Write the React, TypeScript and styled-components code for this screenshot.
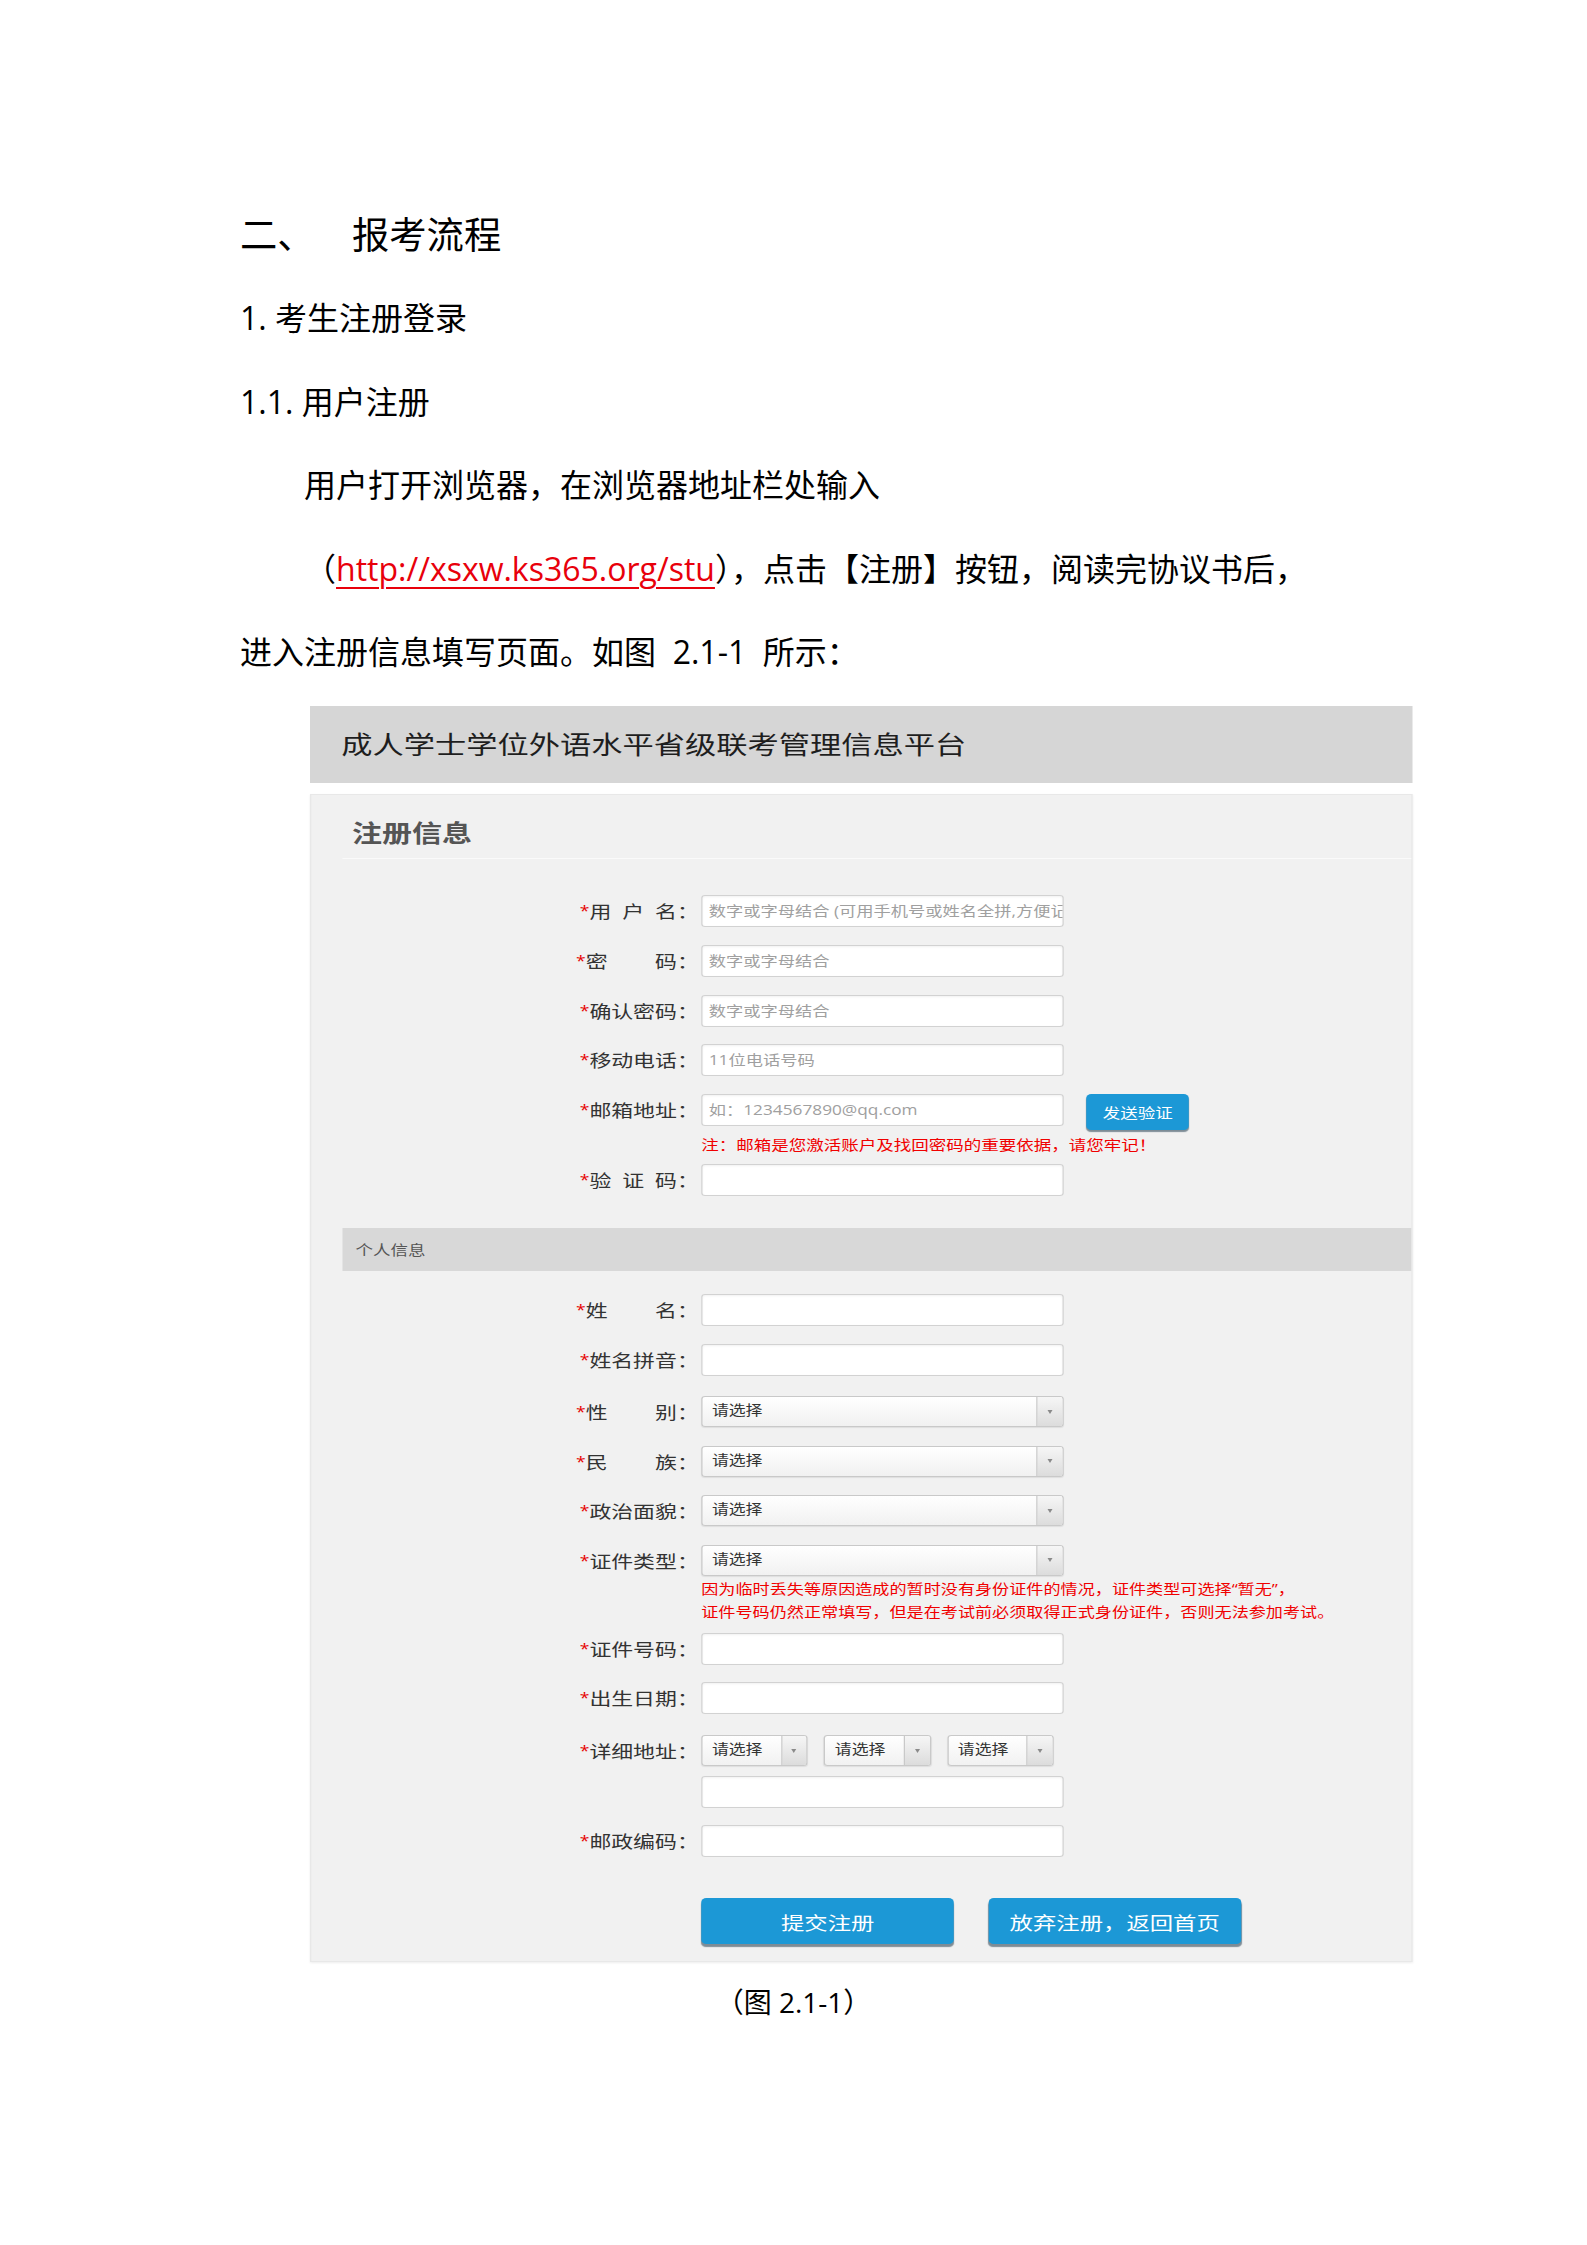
import React from 'react';
import styled, {createGlobalStyle} from 'styled-components';

// the form screenshot sits in the document stretched sideways, so the
// figure is laid out at its natural width and widened as a whole
const STRETCH = 1.25;

const GlobalStyle = createGlobalStyle`
  html, body {
    margin: 0;
    padding: 0;
    background: #fff;
  }
  body {
    font-family: "Open Sans", "Noto Sans CJK SC", sans-serif;
    color: #000;
  }
`

const Page = styled.div`
  width: 1587px;
  min-height: 2245px;
  box-sizing: border-box;
  padding: 193px 240px 0;
`

const Line = styled.p<{$size?: number; $indent?: boolean}>`
  margin: 0;
  font-size: ${p => p.$size || 32}px;
  line-height: 83.4px;
  padding-left: ${p => (p.$indent ? '64px' : '0')};
  white-space: nowrap;
`

const HeadNum = styled.span`
  display: inline-block;
  width: 112px;
`

const Url = styled.a`
  color: #e8000b;
  text-decoration: underline;
  text-decoration-thickness: 2px;
  text-underline-offset: 6px;
`

const Figure = styled.div`
  width: ${1102 / STRETCH}px;
  margin: 13px 0 0 70px;
  transform: scaleX(${STRETCH});
  transform-origin: 0 0;
`

const TitleBar = styled.div`
  height: 77px;
  margin-bottom: 11px;
  padding-left: 25px;
  background: #d6d6d6;
  color: #1e1e1e;
  font-size: 25px;
  line-height: 77px;
  white-space: nowrap;
`

const Panel = styled.div`
  background: #f1f1f1;
  border: 1px solid #e8e8e8;
  box-shadow: 0 1px 2px rgba(0, 0, 0, 0.07);
  padding: 0 0 17px 25px;
`

const PanelHeader = styled.div`
  padding: 13px 0 0 7.6px;
  height: 50px;
  line-height: 50px;
  font-size: 24px;
  font-weight: bold;
  color: #555;
  border-bottom: 1px solid #fafafa;
`

const SubBar = styled.div`
  margin-top: 32px;
  height: 43px;
  line-height: 43px;
  padding-left: 10.4px;
  background: #d8d8d8;
  color: #555;
  font-size: 14px;
`

const Row = styled.div<{$top?: number}>`
  display: grid;
  grid-template-columns: 285px 1fr;
  column-gap: 2px;
  align-items: start;
  margin-top: ${p => (p.$top ?? 17.6)}px;
`

const Label = styled.div`
  height: 32px;
  line-height: 32px;
  text-align: right;
  font-size: 17.5px;
  color: #333;
  white-space: nowrap;
`

const Star = styled.span`
  color: #e60000;
  font-size: 14px;
  vertical-align: 2px;
`

const Controls = styled.div`
  display: flex;
  flex-direction: column;
  align-items: flex-start;
`

const Inline = styled.div<{$gap: number}>`
  display: flex;
  align-items: flex-start;
  gap: ${p => p.$gap}px;
`

const Input = styled.div<{$top?: number}>`
  box-sizing: border-box;
  width: 289.6px;
  height: 32px;
  margin-top: ${p => p.$top || 0}px;
  padding: 0 5px;
  background: #fff;
  border: 1px solid #d2d2d2;
  border-radius: 3px;
  box-shadow: inset 0 1px 2px rgba(0, 0, 0, 0.06);
  color: #a0a0a0;
  font-size: 13.8px;
  line-height: 30px;
  white-space: nowrap;
  overflow: hidden;
`

const SelectBox = styled.div<{$w: number}>`
  box-sizing: border-box;
  display: flex;
  width: ${p => p.$w}px;
  height: 31px;
  border: 1px solid #c9c9c9;
  border-radius: 3px;
  background: linear-gradient(#ffffff, #f1f1f1);
  box-shadow: 0 1px 1px rgba(0, 0, 0, 0.08);
  overflow: hidden;
`

const SelectText = styled.span`
  flex: 1;
  padding-left: 7.5px;
  color: #333;
  font-size: 13.5px;
  line-height: 27px;
  white-space: nowrap;
`

const SelectArrow = styled.span`
  display: flex;
  align-items: center;
  justify-content: center;
  width: 19.5px;
  border-left: 1px solid #c9c9c9;
  background: linear-gradient(#f6f6f6, #dcdcdc);

  &::after {
    content: '';
    width: 0;
    height: 0;
    border-left: 2.5px solid transparent;
    border-right: 2.5px solid transparent;
    border-top: 4px solid #8a8a8a;
  }
`

const Note = styled.div<{$top: number; $lh: number; $size: number}>`
  margin-top: ${p => p.$top}px;
  color: #f00000;
  font-size: ${p => p.$size}px;
  line-height: ${p => p.$lh}px;
  white-space: nowrap;
`

const Button = styled.div<{$w: number; $h: number; $size: number}>`
  display: flex;
  align-items: center;
  justify-content: center;
  width: ${p => p.$w}px;
  height: ${p => p.$h}px;
  border-radius: 4px;
  background: #1c98d6;
  box-shadow: 0 ${p => (p.$h > 40 ? 3 : 2)}px 1px #7d8c96;
  color: #fff;
  font-size: ${p => p.$size}px;
  white-space: nowrap;
`

const Caption = styled.p`
  margin: 12px 0 0;
  text-align: center;
  font-size: 28px;
  line-height: 56px;
`

const FormRow: React.FC<{label?: string; top?: number; children: React.ReactNode}> = ({label, top, children}) => (
    <Row $top={top}>
        <Label>{label ? <><Star>*</Star>{label}：</> : null}</Label>
        <Controls>{children}</Controls>
    </Row>
)

const Select: React.FC<{w?: number}> = ({w = 289.6}) => (
    <SelectBox $w={w}>
        <SelectText>请选择</SelectText>
        <SelectArrow/>
    </SelectBox>
)

const App = () => {
    return (
        <Page>
            <GlobalStyle/>
            <Line $size={37.3}><HeadNum>二、</HeadNum>报考流程</Line>
            <Line>1. 考生注册登录</Line>
            <Line>1.1. 用户注册</Line>
            <Line $indent>用户打开浏览器，在浏览器地址栏处输入</Line>
            <Line $indent>（<Url href="#">http://xsxw.ks365.org/stu</Url>），点击【注册】按钮，阅读完协议书后，</Line>
            <Line>进入注册信息填写页面。如图{'\u00a0 '}2.1-1{'\u00a0 '}所示：</Line>

            <Figure>
                <TitleBar>成人学士学位外语水平省级联考管理信息平台</TitleBar>
                <Panel>
                    <PanelHeader>注册信息</PanelHeader>

                    <FormRow label={'用\u2002户\u2002名'} top={36}>
                        <Input>数字或字母结合 (可用手机号或姓名全拼,方便记忆)</Input>
                    </FormRow>
                    <FormRow label={'密\u3000\u3000\u2009码'}>
                        <Input>数字或字母结合</Input>
                    </FormRow>
                    <FormRow label={'确认密码'}>
                        <Input>数字或字母结合</Input>
                    </FormRow>
                    <FormRow label={'移动电话'}>
                        <Input>11位电话号码</Input>
                    </FormRow>
                    <FormRow label={'邮箱地址'}>
                        <Inline $gap={18.4}>
                            <Input>如：1234567890@qq.com</Input>
                            <Button $w={82.4} $h={36} $size={14}>发送验证</Button>
                        </Inline>
                        <Note $top={6} $lh={17} $size={14}>注：邮箱是您激活账户及找回密码的重要依据，请您牢记！</Note>
                    </FormRow>
                    <FormRow label={'验\u2002证\u2002码'} top={11.6}>
                        <Input/>
                    </FormRow>

                    <SubBar>个人信息</SubBar>

                    <FormRow label={'姓\u3000\u3000\u2009名'} top={22.5}>
                        <Input/>
                    </FormRow>
                    <FormRow label={'姓名拼音'} top={18}>
                        <Input/>
                    </FormRow>
                    <FormRow label={'性\u3000\u3000\u2009别'} top={20.5}>
                        <Select/>
                    </FormRow>
                    <FormRow label={'民\u3000\u3000\u2009族'} top={17.5}>
                        <Select/>
                    </FormRow>
                    <FormRow label={'政治面貌'} top={17.5}>
                        <Select/>
                    </FormRow>
                    <FormRow label={'证件类型'} top={17.5}>
                        <Select/>
                        <Note $top={1.5} $lh={23} $size={13.7}>
                            因为临时丢失等原因造成的暂时没有身份证件的情况，证件类型可选择“暂无”，<br/>
                            证件号码仍然正常填写，但是在考试前必须取得正式身份证件，否则无法参加考试。
                        </Note>
                    </FormRow>
                    <FormRow label={'证件号码'} top={10}>
                        <Input/>
                    </FormRow>
                    <FormRow label={'出生日期'} top={17}>
                        <Input/>
                    </FormRow>
                    <FormRow label={'详细地址'} top={21}>
                        <Inline $gap={13.2}>
                            <Select w={85.2}/>
                            <Select w={85.2}/>
                            <Select w={85.2}/>
                        </Inline>
                        <Input $top={10}/>
                    </FormRow>
                    <FormRow label={'邮政编码'} top={17}>
                        <Input/>
                    </FormRow>
                    <FormRow top={41}>
                        <Inline $gap={27.2}>
                            <Button $w={202.4} $h={46} $size={18.7}>提交注册</Button>
                            <Button $w={202.4} $h={46} $size={18.7}>放弃注册，返回首页</Button>
                        </Inline>
                    </FormRow>
                </Panel>
            </Figure>

            <Caption>（图 2.1-1）</Caption>
        </Page>
    );
};

export default App;
